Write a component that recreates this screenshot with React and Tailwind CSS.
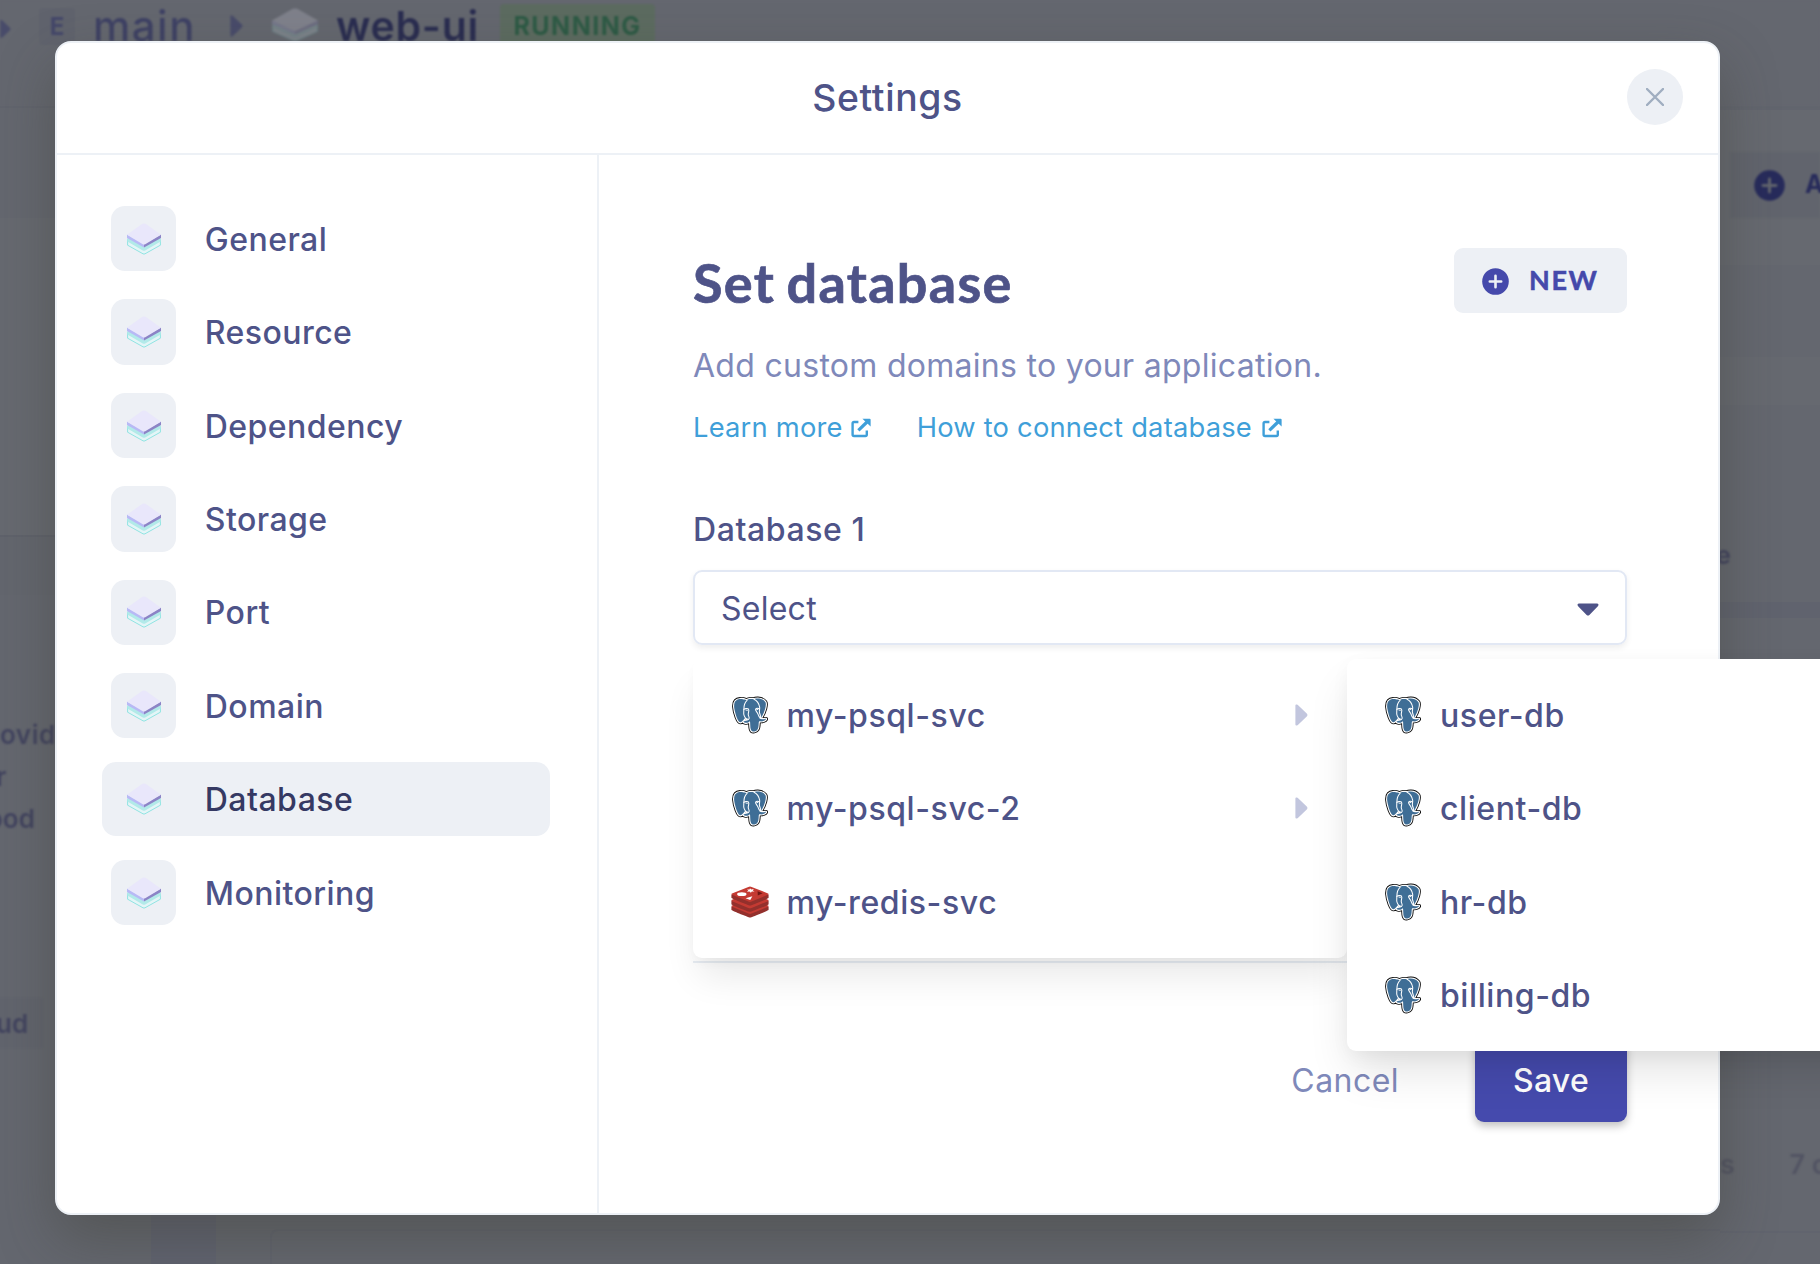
import React from "react";

const NAV = ["General", "Resource", "Dependency", "Storage", "Port", "Domain", "Database", "Monitoring"];

const SERVICES = [
  { name: "my-psql-svc", kind: "postgres", children: true },
  { name: "my-psql-svc-2", kind: "postgres", children: true },
  { name: "my-redis-svc", kind: "redis", children: false },
];

const DATABASES = ["user-db", "client-db", "hr-db", "billing-db"];

function StackIcon({ className }) {
  return (
    <svg viewBox="0 0 34 32" className={className} fill="none" preserveAspectRatio="none">
      <path d="M0.6 16.5 L17 25.5 L33.4 16.5 V22.2 L18 30.8 Q17 31.4 16 30.8 L0.6 22.2 Z" fill="#e4f5f7" stroke="#86e2e0" strokeWidth="0.9" />
      <path d="M0.4 13 L17 22 L33.6 13 V18.4 L18.2 27.4 Q17 28.1 15.8 27.4 L0.4 18.4 Z" fill="#b2eae9" />
      <path d="M0 11.6 L17 21 V24.6 L0 15 Z" fill="#b8b9f5" />
      <path d="M34 11.6 L17 21 V24.6 L34 15 Z" fill="#8c84c6" />
      <path d="M15.4 0.8 Q17 0 18.6 0.8 L34 11.8 L18.2 21.2 Q17 21.9 15.8 21.2 L0 11.8 Z" fill="#e9e7fb" />
    </svg>
  );
}

const ELEPHANT =
  "M93.809 92.112c.785-6.533.55-7.492 5.416-6.433l1.235.108c3.742.17 8.637-.602 11.513-1.938 6.191-2.873 9.861-7.668 3.758-6.409-13.924 2.873-14.881-1.842-14.881-1.842 14.703-21.815 20.849-49.508 15.543-56.287-14.47-18.489-39.517-9.746-39.936-9.52l-.134.025c-2.751-.571-5.83-.912-9.289-.968-6.301-.104-11.082 1.652-14.709 4.402 0 0-44.683-18.409-42.604 23.151.442 8.841 12.672 66.898 27.26 49.362 5.332-6.412 10.484-11.834 10.484-11.834 2.558 1.699 5.622 2.567 8.834 2.255l.249-.212c-.078.796-.044 1.575.099 2.497-3.757 4.199-2.653 4.936-10.166 6.482-7.602 1.566-3.136 4.355-.221 5.084 3.535.884 11.712 2.136 17.238-5.598l-.22.882c1.474 1.18 1.375 8.477 1.583 13.69.209 5.214.558 10.079 1.621 12.948 1.063 2.868 2.317 10.256 12.191 8.14 8.252-1.764 14.561-4.309 15.136-27.985z";

function PostgresIcon() {
  return (
    <svg viewBox="-1 -1 130 130" className="h-[38px] w-[38px]" fill="none" strokeLinecap="round" strokeLinejoin="round">
      <path d={ELEPHANT} fill="#000" stroke="#0c0c0c" strokeWidth="13.6" />
      <path d={ELEPHANT} fill="#3f6e96" stroke="#fff" strokeWidth="7.6" />
      <path d={ELEPHANT} fill="#3f6e96" />
      <g stroke="#fff" strokeWidth="3.6">
        <path d="M54 14c-9 8-11 19-11 30 0 7-2 15 1 22 2 5 5 9 8 12" />
        <path d="M43 45c4-4 13-5 16-1 3 5-1 11-1 18 0 6 4 8 3 13-2 6-7 8-11 3" />
        <path d="M78 10c11 6 17 16 19 27 1 5-1 10-1 16 0 8 8 13 3 23" />
        <path d="M96 43c-5-3-12-2-13 2-1 5 6 9 8 15 2 7 4 11 9 15" />
      </g>
      <path d="M50 47l5 1M87 46l4-1" stroke="#fff" strokeWidth="3.2" />
    </svg>
  );
}

function RedisIcon() {
  return (
    <svg viewBox="0 0 38 32" className="h-[32px] w-[38px]">
      {[12.2, 6.6, 0.2].map((dy) => (
        <g key={dy} transform={`translate(0 ${dy})`}>
          <path d="M0.4 8.2 V11.6 C0.4 12.4 15.5 18.4 17.6 19 Q19 19.4 20.4 19 C22.5 18.4 37.6 12.4 37.6 11.6 V8.2 Z" fill="#93302c" />
          <path d="M1 7.2 L17.4 0.7 Q19 0.1 20.6 0.7 L37 7.2 Q38 7.9 37 8.6 L20.6 15.4 Q19 16 17.4 15.4 L1 8.6 Q0 7.9 1 7.2 Z" fill="#c43a32" />
        </g>
      ))}
      <ellipse cx="10.8" cy="8.2" rx="4.7" ry="1.9" fill="#fff" />
      <path d="M19 2.2 l1.2 1.2 2.6-.5 -1 1.5 1.8 1 -2.8.2 -.9 1.2 -1.4-1.3 -2.6.3 1.4-1.3 -1.3-1 2.5.1z" fill="#fff" />
      <path d="M14.6 12.3 L21.4 10.2 L19.2 14 Z" fill="#fff" />
      <path d="M26.6 5.2 L31.6 7.2 L26.8 9.4 Z" fill="#6e1713" />
    </svg>
  );
}

function ExternalIcon() {
  return (
    <svg viewBox="0 0 20 20" className="h-5 w-5" fill="none" stroke="currentColor">
      <path d="M7.4 4 H3 Q1.6 4 1.6 5.4 V16.6 Q1.6 18 3 18 H14.4 Q15.8 18 15.8 16.6 V12.4" strokeWidth="2.4" />
      <path d="M7.4 12.4 L16 4" strokeWidth="3.2" />
      <path d="M11.4 0.8 H18.6 Q19.6 0.8 19.6 1.7 V8.6 Z" fill="currentColor" stroke="none" />
    </svg>
  );
}

function PlusCircle({ className, cross }) {
  return (
    <svg viewBox="0 0 27 27" className={className}>
      <circle cx="13.5" cy="13.5" r="13.3" fill="currentColor" />
      <path d="M13.5 7.8 V19.2 M7.8 13.5 H19.2" stroke={cross} strokeWidth="2.6" strokeLinecap="round" />
    </svg>
  );
}

function CaretRight({ className }) {
  return (
    <svg viewBox="0 0 13 22" className={className}>
      <path d="M0.4 1.6 Q0.4 0.2 1.7 0.5 Q2.6 0.7 3.4 1.5 L12 9.8 Q13 11 12 12.2 L3.4 20.4 Q2.6 21.2 1.7 21.4 Q0.4 21.6 0.4 20.4 Z" fill="currentColor" />
    </svg>
  );
}

function MenuItem({ icon, label, children }) {
  return (
    <div className="flex h-[93.33px] items-center pl-[37.5px] pr-[39px]">
      <span className="flex w-[38px] justify-center">{icon}</span>
      <span className="ml-[18px] mt-[2px] text-[32px] font-medium tracking-[0.018em]">{label}</span>
      {children}
    </div>
  );
}

function Backdrop() {
  return (
    <div className="flex h-full w-full flex-col bg-[#64676f] text-[#42445f]">
      <div className="flex h-[106px] items-start bg-[#64676f] blur-[1.3px]">
        <CaretRight className="mt-[18px] h-[22px] w-[11px] text-[#484b6a]" />
        <span className="ml-[28px] mt-2 flex h-[37px] w-[36px] items-center justify-center rounded bg-[#60636d] text-[24px] font-bold text-[#44476a]">E</span>
        <span className="ml-[18px] w-[100px] text-[42px] font-medium leading-[52px] tracking-[0.035em] text-[#3e4164]">main</span>
        <CaretRight className="ml-[37px] mt-[15px] h-[22px] w-[13px] text-[#484b6a]" />
        <StackIcon className="ml-[29px] mt-[8px] h-[34px] w-[46px] opacity-20" />
        <span className="ml-[18px] w-[144px] text-[41px] font-semibold leading-[52px] tracking-[0.018em] text-[#292c50]">web-ui</span>
        <span className="ml-[20px] mt-1 flex h-[46px] w-[155px] items-center justify-center rounded bg-[#5c6b60] text-[25px] font-bold tracking-[0.06em] text-[#2d5a45]">RUNNING</span>
      </div>
      <div className="flex grow justify-between">
        <div className="flex w-[55px] flex-col overflow-hidden border-t-2 border-[#61646d] text-[26px] font-semibold">
          <div className="h-[110px] shrink-0 bg-[#64676f]" />
          <div className="h-[317px] shrink-0 bg-[#666970]" />
          <div className="h-[60px] shrink-0 border-t-2 border-[#5f626b] bg-[#63666e]" />
          <div className="flex flex-col blur-[1px]">
            <span className="mt-[119px] leading-[42px] tracking-[0.02em]">ovid</span>
            <span className="-ml-1 leading-[42px]">r</span>
            <span className="-ml-[13px] leading-[42px]">ood</span>
            <span className="-ml-1 mt-[158px] flex h-[50px] w-[47px] items-center bg-[#61646d]">ud</span>
          </div>
        </div>
        <div className="flex grow items-end">
          <div className="ml-[96px] h-[60px] w-[65px] bg-[#606370]" />
          <div className="ml-[54px] h-[35px] grow rounded-tl-lg border-l-2 border-t-2 border-[#61646e]" />
        </div>
        <div className="flex w-[100px] flex-col overflow-hidden border-t-4 border-[#62656e] text-[25px] font-semibold">
          <div className="flex h-[155px] shrink-0 items-start bg-[#666970]">
            <div className="ml-[10px] mt-[42px] flex h-[66px] w-[90px] items-center bg-[#61646d] pl-[24px] text-[#272b5b] blur-[1px]">
              <PlusCircle className="h-[31px] w-[31px] shrink-0" cross="#61646d" />
              <span className="ml-[20px] font-bold">A</span>
            </div>
          </div>
          <div className="h-[92px] shrink-0" />
          <div className="h-[48px] shrink-0 bg-[#666970]" />
          <div className="mt-[133px] -ml-1 font-bold leading-[34px] blur-[1px]">e</div>
          <div className="mt-[30px] h-[16px] shrink-0 bg-[#60636e]" />
          <div className="mt-[530px] flex text-[27px] leading-[34px] tracking-[0.1em] text-[#525463] blur-[1px]">
            <span>s</span>
            <span className="ml-[52px]">7</span>
            <span className="ml-1">c</span>
          </div>
          <div className="mt-[49px] h-[2px] bg-[#61646e]" />
        </div>
      </div>
    </div>
  );
}

function ServiceMenu() {
  return (
    <div className="absolute left-0 top-[89px] w-[653.5px] rounded-[9px] bg-white py-[9.33px] shadow-[0_24px_36px_-6px_rgba(0,0,0,0.09),0_6px_12px_-2px_rgba(0,0,0,0.04)]">
      {SERVICES.map((s) => (
        <MenuItem key={s.name} label={s.name} icon={s.kind === "redis" ? <RedisIcon /> : <PostgresIcon />}>
          {s.children && <CaretRight className="ml-auto h-[22px] w-[13px] text-[#c2c6de]" />}
        </MenuItem>
      ))}
      <div className="absolute left-full top-0 w-[653.5px] rounded-[9px] bg-white py-[9.33px] shadow-[0_24px_46px_-6px_rgba(0,0,0,0.12),0_6px_20px_-2px_rgba(0,0,0,0.05)]">
        {DATABASES.map((name) => (
          <MenuItem key={name} label={name} icon={<PostgresIcon />} />
        ))}
      </div>
    </div>
  );
}

export default function App() {
  return (
    <div className="relative h-[1264px] w-[1820px] overflow-hidden font-['Inter',sans-serif] text-[#4e5388]">
      <Backdrop />
      <div className="absolute left-[55px] top-[41px] flex h-[1174px] w-[1665px] flex-col rounded-[16px] border-2 border-[#edf1f6] bg-white shadow-[0_24px_56px_0px_rgba(60,60,50,0.4)]">
        <header className="grid h-[112px] shrink-0 grid-cols-[1fr_auto_1fr] items-center border-b-2 border-[#edf1f6]">
          <span />
          <h1 className="text-[37.33px] font-medium tracking-[0.016em]">Settings</h1>
          <button className="mb-[3px] mr-[35px] flex h-14 w-14 items-center justify-center justify-self-end rounded-full bg-[#edf0f5]">
            <svg viewBox="0 0 18 18" className="h-[18px] w-[18px]" stroke="#a0aec0" strokeWidth="2.4" strokeLinecap="round">
              <path d="M1 1 L17 17 M17 1 L1 17" />
            </svg>
          </button>
        </header>
        <div className="flex grow">
          <nav className="flex w-[542px] shrink-0 flex-col gap-[18.75px] border-r-2 border-[#edf1f6] pl-[45px] pr-[47px] pt-[46.4px]">
            {NAV.map((name) => (
              <div
                key={name}
                className={`flex h-[74.67px] items-center rounded-[14px] pl-[9px] ${name === "Database" ? "bg-[#edf0f5] text-[#353963]" : ""}`}
              >
                <span className="flex h-[65.33px] w-[65.33px] items-center justify-center rounded-[14px] bg-[#edf0f5]">
                  <StackIcon className="h-[32px] w-[34px]" />
                </span>
                <span className="ml-[28.5px] mt-[2px] text-[32px] font-medium tracking-[0.014em]">{name}</span>
              </div>
            ))}
          </nav>
          <main className="flex grow flex-col pl-[94px] pr-[91px] pt-[93px]">
            <div className="flex h-[65px] items-center justify-between">
              <h2 className="mt-[3px] font-['Lato',sans-serif] text-[54px] font-bold tracking-[0.024em] [-webkit-text-stroke:0.7px_#4e5388] [word-spacing:-3px]">Set database</h2>
              <button className="flex h-[65px] w-[173px] items-center rounded-[9px] bg-[#edf0f5] pl-[28px] text-[#4549ab]">
                <PlusCircle className="mt-[2px] h-[27px] w-[27px]" cross="#edf0f5" />
                <span className="-mt-px ml-[20px] font-['Lato',sans-serif] text-[27px] font-bold tracking-[0.06em] [-webkit-text-stroke:0.5px_#4549ab]">NEW</span>
              </button>
            </div>
            <p className="mt-[30px] whitespace-nowrap text-[32px] leading-[46px] tracking-[0.009em] text-[#7f89ba]">Add custom domains to your application.</p>
            <div className="mt-[19px] flex h-[40px] items-center gap-[46px] whitespace-nowrap text-[27.3px] tracking-[0.008em] text-[#3f9fd9]">
              <a className="flex items-center gap-[8px]">Learn more <ExternalIcon /></a>
              <a className="flex items-center gap-[10px]">How to connect database <ExternalIcon /></a>
            </div>
            <label className="mt-[59px] text-[32px] font-medium leading-[46px] tracking-[0.018em]">Database 1</label>
            <div className="relative mt-[17px]">
              <div className="flex h-[75px] items-center justify-between rounded-[9px] border-2 border-[#e2e8f4] pl-[26px] pr-[26px] shadow-[0_3px_6px_rgba(0,0,0,0.07)]">
                <span className="mt-[2px] text-[32px] tracking-[0.008em]">Select</span>
                <svg viewBox="0 0 22 13" className="mt-[3px] h-[13px] w-[22px]">
                  <path d="M1.8 0.4 H20.2 Q21.8 0.6 21.4 2.2 Q21.2 3 20.4 3.7 L12.4 12 Q11 13.2 9.6 12 L1.6 3.7 Q0.8 3 0.6 2.2 Q0.2 0.6 1.8 0.4 Z" fill="#4e5388" />
                </svg>
              </div>
              <ServiceMenu />
            </div>
            <div className="mt-[316px] h-[2px] shrink-0 bg-[#e9eef4]" />
            <div className="mt-[75px] flex h-[84px] shrink-0 items-center justify-end">
              <button className="mt-px text-[32px] tracking-[0.014em] text-[#7f89ba]">Cancel</button>
              <button className="ml-[76px] h-[84px] w-[152px] rounded-[9px] bg-[#454aad] pt-[2px] text-[32px] font-medium tracking-[0.01em] text-white shadow-[0_4px_8px_rgba(0,0,0,0.25)]">Save</button>
            </div>
          </main>
        </div>
      </div>
    </div>
  );
}
